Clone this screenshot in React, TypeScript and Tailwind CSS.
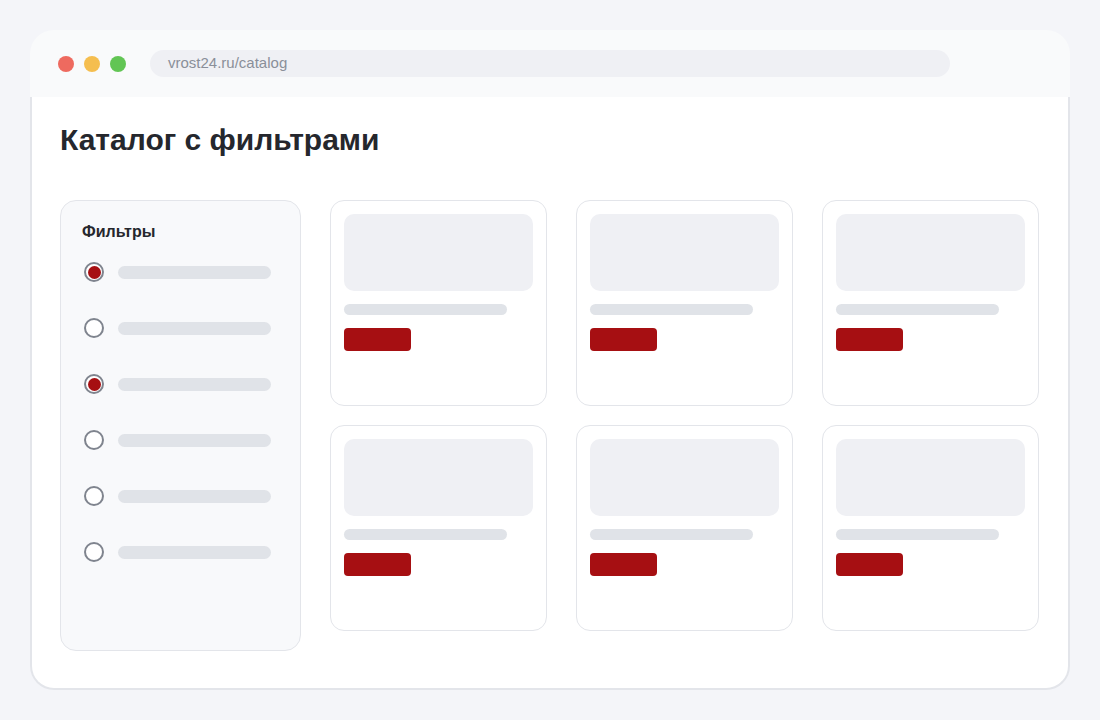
import React from "react";

// Catalog mockup: browser window with filter sidebar and product grid skeleton

const filters = [true, false, true, false, false, false];
const cards = [0, 1, 2, 3, 4, 5];

function Radio({ checked }: { checked: boolean }) {
  return (
    <div className="w-5 h-5 shrink-0 rounded-full border-2 border-[#7f848e] bg-white flex items-center justify-center">
      {checked && <div className="w-[13px] h-[13px] rounded-full bg-[#a60f12]" />}
    </div>
  );
}

function ProductCard() {
  return (
    <div className="h-[206px] rounded-[14px] border border-[#e3e5ea] bg-white p-[13px] flex flex-col gap-[13px]">
      <div className="h-[77px] rounded-[10px] bg-[#eff0f4]" />
      <div className="h-[11px] w-[163px] rounded-full bg-[#e0e3e8]" />
      <div className="h-[23px] w-[67px] rounded-[4px] bg-[#a60f12]" />
    </div>
  );
}

export default function App() {
  return (
    <div
      className="min-h-screen bg-[#f4f5f9] p-[30px]"
      style={{ fontFamily: '"Liberation Sans", Arial, sans-serif' }}
    >
      <div className="h-[660px] flex flex-col">
        {/* Browser bar */}
        <div className="h-[67px] shrink-0 rounded-t-[24px] bg-[#f9fafb] flex items-center pl-[28px]">
          <div className="flex items-center gap-[10px]">
            <div className="w-4 h-4 rounded-full bg-[#ee6a5f]" />
            <div className="w-4 h-4 rounded-full bg-[#f5be4f]" />
            <div className="w-4 h-4 rounded-full bg-[#62c554]" />
          </div>
          <div className="ml-[24px] w-[800px] h-[27px] rounded-full bg-[#eff0f4] flex items-center px-[18px] text-[15px] text-[#8a8f99]">
            vrost24.ru/catalog
          </div>
        </div>

        {/* Page body */}
        <div className="flex-1 bg-white border-x-2 border-b-2 border-[#e3e5ea] rounded-b-[24px] pt-[25px] px-[28px]">
          <h1 className="text-[30px] leading-[36px] font-bold text-[#25272d]">
            Каталог с фильтрами
          </h1>

          <div className="mt-[42px] flex gap-[29px]">
            {/* Filters */}
            <div className="w-[241px] h-[451px] shrink-0 rounded-[16px] border border-[#e3e5ea] bg-[#f8f9fb] pt-[21px] pl-[21px]">
              <div className="text-[16px] leading-[20px] font-bold text-[#25272d]">
                Фильтры
              </div>
              <div className="mt-[2px] flex flex-col">
                {filters.map((checked, i) => (
                  <div key={i} className="h-[56px] flex items-center gap-[14px] pl-[2px]">
                    <Radio checked={checked} />
                    <div className="h-[13px] w-[153px] rounded-full bg-[#e0e3e8]" />
                  </div>
                ))}
              </div>
            </div>

            {/* Products */}
            <div className="grid grid-cols-[217px_217px_217px] gap-x-[29px] gap-y-[19px] content-start">
              {cards.map((c) => (
                <ProductCard key={c} />
              ))}
            </div>
          </div>
        </div>
      </div>
    </div>
  );
}
